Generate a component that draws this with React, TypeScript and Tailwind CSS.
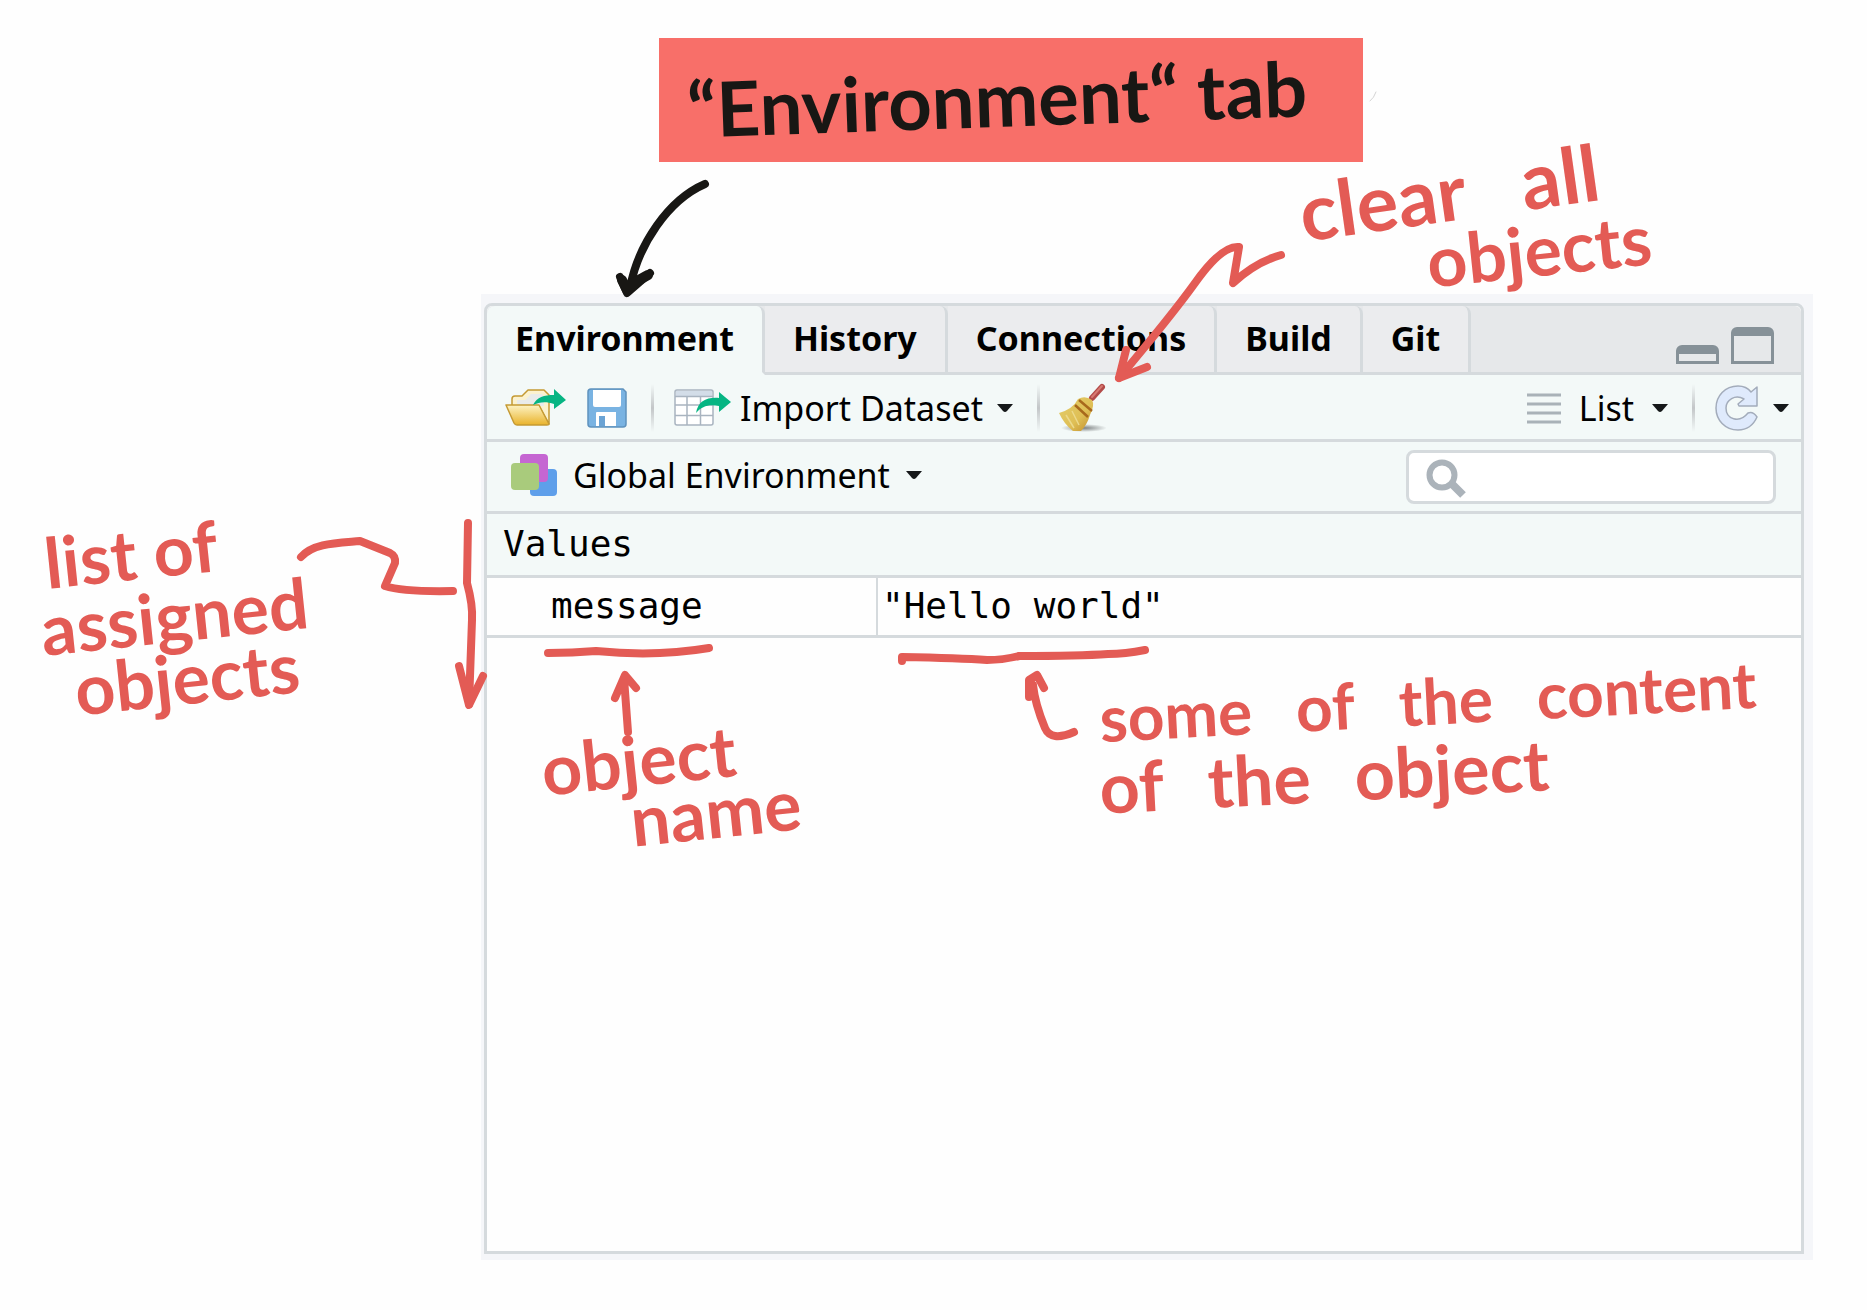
import type { ReactNode } from 'react'

const LINE = 'border-[#d5dadd]'
const HAND = "font-['Lato',sans-serif] font-bold leading-none whitespace-nowrap"

function Caret() {
  return (
    <svg className="h-2 w-4 shrink-0" viewBox="0 0 16 8" aria-hidden="true">
      <path d="M0 0H16L10 7Q8 9 6 7Z" fill="#15181a" />
    </svg>
  )
}

function Separator() {
  return <span className="h-12 w-[3px] shrink-0 bg-linear-to-b from-transparent via-[#c3c6c8] to-transparent" />
}

function FolderIcon() {
  return (
    <svg className="h-10 w-[62px]" viewBox="0 0 62 40" aria-hidden="true">
      <defs>
        <linearGradient id="folder" x1="0" y1="0" x2="0" y2="1">
          <stop offset="0" stopColor="#fdf3c4" />
          <stop offset="1" stopColor="#e9b32b" />
        </linearGradient>
      </defs>
      <path d="M7 19V11Q7 8 10 8H17L23 2H39L44 7V36L34 18Z" fill="#fbf2cf" stroke="#c59a33" strokeWidth="1.5" strokeLinejoin="round" />
      <path d="M12 18V12H20L26 6H37L39 9V18Z" fill="#e9ebea" />
      <path d="M1 17H34L44 36Q44 37 42 37H12Q10 37 9 35Z" fill="url(#folder)" stroke="#c59a33" strokeWidth="1.5" strokeLinejoin="round" />
      <path d="M28 17C32 9 39 7 49 7V1L61 12L49 21V16C41 13 34 14 28 17Z" fill="#06b583" />
    </svg>
  )
}

function SaveIcon() {
  return (
    <svg className="size-10" viewBox="0 0 40 40" aria-hidden="true">
      <path d="M4 1H36L39 4V36Q39 39 36 39H4Q1 39 1 36V4Q1 1 4 1Z" fill="#79b3e2" stroke="#5f92bd" strokeWidth="1.5" />
      <path d="M6 2H34V17Q34 19 32 19H8Q6 19 6 17Z" fill="#fff" />
      <path d="M9 25Q9 24 10 24H29V38H9Z" fill="#fff" />
      <path d="M12 28H18V38H12Z" fill="#6aa3d4" />
    </svg>
  )
}

function DatasetIcon() {
  return (
    <svg className="h-10 w-[58px]" viewBox="0 0 58 40" aria-hidden="true">
      <rect x="1" y="2" width="38" height="35" rx="2" fill="#fff" stroke="#a9b4c0" strokeWidth="1.5" />
      <path d="M2 3H38V8H2Z" fill="#d3dde8" />
      <path d="M1 8.500H39M1 17H39M1 27.500H39M13 8V37M26.500 8V37" stroke="#a9b4c0" strokeWidth="1.5" />
      <path d="M22 25C24 13 33 9 45 10V4L57 14L45 24V18C35 16 28 18 22 25Z" fill="#06b583" />
    </svg>
  )
}

function BroomIcon() {
  return (
    <svg className="h-[50px] w-12" viewBox="0 0 48 50" aria-hidden="true">
      <defs>
        <linearGradient id="straw" x1="0" y1="0" x2="1" y2="1">
          <stop offset="0.2" stopColor="#e2c964" />
          <stop offset="0.6" stopColor="#dfbf55" />
          <stop offset="1" stopColor="#c08c2c" />
        </linearGradient>
        <radialGradient id="shade">
          <stop offset="0" stopColor="#7d8182" />
          <stop offset="1" stopColor="#7d8182" stopOpacity="0" />
        </radialGradient>
      </defs>
      <ellipse cx="26" cy="45" rx="23" ry="4" fill="url(#shade)" />
      <path d="M34 15L44 4" stroke="#b34b49" strokeWidth="6" strokeLinecap="round" />
      <path d="M34 14L44 3" stroke="#d77a72" strokeWidth="2" strokeLinecap="round" />
      <path d="M1 30Q15 26 20 16Q27 12 34 17Q37 22 32 32Q29 42 23 48L15 48Q6 41 1 30Z" fill="url(#straw)" />
      <path d="M17 22L30 34M21 17L34 28" stroke="#a8691c" strokeWidth="2.500" />
      <path d="M8 32L16 45M14 28L21 42" stroke="#ecd98a" strokeWidth="1.500" />
    </svg>
  )
}

function LinesIcon() {
  return (
    <svg className="h-8 w-[34px]" viewBox="0 0 34 32" aria-hidden="true">
      <path d="M0 3H34M0 12H34M0 21H34M0 30H34" stroke="#a9b2b8" strokeWidth="3" />
    </svg>
  )
}

function RefreshIcon() {
  return (
    <svg className="h-[46px] w-11" viewBox="0 0 44 46" aria-hidden="true">
      <path
        d="M42 2V21H24L23 19L29 14C20 9 11 15 11 23C11 34 24 39 33 28Q38 26 42 32C38 41 31 45 23 45C10 45 1 35 1 23C1 11 10 1 23 1C29 1 33 3 36 7Z"
        fill="#dfeafc"
        stroke="#a3acbb"
        strokeWidth="1.500"
        strokeLinejoin="round"
      />
    </svg>
  )
}

function EnvironmentIcon() {
  return (
    <svg className="h-[42px] w-[46px]" viewBox="0 0 46 42" aria-hidden="true">
      <rect x="19" y="15" width="27" height="27" rx="4" fill="#5e9fea" />
      <rect x="9" y="0" width="28" height="28" rx="4" fill="#c566d2" />
      <rect x="0" y="9" width="28" height="27" rx="4" fill="#a9cb7c" />
    </svg>
  )
}

function SearchIcon() {
  return (
    <svg className="h-10 w-[42px] shrink-0" viewBox="0 0 42 40" aria-hidden="true">
      <circle cx="17" cy="16" r="12.500" fill="none" stroke="#abb3ba" strokeWidth="6" />
      <path d="M26 24L38 36" stroke="#abb3ba" strokeWidth="8" />
    </svg>
  )
}

function Tab({ active, children }: { active?: boolean; children: ReactNode }) {
  return (
    <button
      role="tab"
      aria-selected={!!active}
      className={
        active
          ? 'rounded-t-lg border-r-3 border-b-3 border-r-[#d5dadd] border-b-[#f3f9f8] bg-[#f3f9f8] px-7 pb-0.5 font-bold'
          : `rounded-tr-lg border-r-3 border-b-3 ${LINE} bg-[#ebecee] px-7 pb-0.5 font-bold`
      }
    >
      {children}
    </button>
  )
}

function Marks() {
  return (
    <svg className="pointer-events-none absolute inset-0 size-full overflow-visible" fill="none" strokeLinecap="round" strokeLinejoin="round" aria-hidden="true">
      <g stroke="#181714" strokeWidth="8">
        <path d="M705 184C668 200 638 245 630 288" />
        <path d="M620 277L627 293L650 273" />
        <path d="M622 280L627 290L634 284L628 286L648 275" strokeWidth="10" />
      </g>
      <path d="M1376 92Q1374 98 1370 101" stroke="#d4d4d4" strokeWidth="1" />
      <g stroke="#e35b55" strokeWidth="8">
        <path d="M1281 255Q1256 262 1233 283L1239 247Q1222 245 1195 283Q1172 315 1119 378" />
        <path d="M1126 350L1119 378L1147 367" />
        <path d="M301 557C313 543 337 543 360 541L390 553Q396 556 395 563L385 586Q403 592 453 591" />
        <path d="M468 523L467 583Q473 605 472 620L469 704" />
        <path d="M459 666L469 705L483 676" />
        <path d="M548 653Q572 653 596 651Q656 657 709 648" />
        <path d="M902 661V657Q960 658 987 660Q1003 660 1019 656Q1080 656 1108 654Q1125 654 1145 650" />
        <path d="M628 732L624 678M615 698L625 675L636 688" />
        <path d="M1074 732Q1051 742 1045 728Q1035 704 1033 685M1029 697V680L1037 675L1044 688" />
      </g>
    </svg>
  )
}

export default function App() {
  return (
    <div className="relative min-h-screen bg-[#fefefe] font-['Noto_Sans',sans-serif] text-[34px] leading-10 text-black">
      <header className="flex h-[294px] pt-[38px] pl-[659px]">
        <h1 className={`${HAND} flex h-[124px] w-[704px] items-center bg-[#f86f69] pb-1 pl-7 text-[76px] text-[#181714]`}>
          <span className="-rotate-2">“Environment“ tab</span>
        </h1>
      </header>

      <div className="flex">
        <aside className="w-[481px] shrink-0 pt-[228px] text-[#e35b55]">
          <p className="flex flex-col font-['Lato',sans-serif] text-[70px] leading-[62px] font-bold whitespace-nowrap">
            <span className="ml-11 -rotate-6 self-start">list of</span>
            <span className="ml-10 -rotate-6 self-start">assigned</span>
            <span className="ml-[74px] -rotate-6 self-start">objects</span>
          </p>
        </aside>

        <main className="mr-[54px] min-w-0 flex-1 bg-[#f5f6f9] pt-[9px] pr-[9px] pb-1.5 pl-[3px]">
          <section className={`rounded-t-lg border-3 ${LINE} bg-[#fefefe]`}>
            <div className="flex h-[69px] rounded-t-md bg-[#e6e8ea]">
              <div role="tablist" className="flex">
                <Tab active>Environment</Tab>
                <Tab>History</Tab>
                <Tab>Connections</Tab>
                <Tab>Build</Tab>
                <Tab>Git</Tab>
              </div>
              <div className={`flex flex-1 items-end justify-end gap-3 border-b-3 ${LINE} pr-[27px] pb-2`}>
                <button aria-label="Minimize" className="h-[19px] w-[43px] rounded-t-md border-3 border-t-9 border-[#869198]" />
                <button aria-label="Maximize" className="h-[37px] w-[43px] rounded-t-md border-3 border-t-9 border-[#869198]" />
              </div>
            </div>

            <div className={`flex h-[67px] items-center border-b-3 ${LINE} bg-[#f3f9f8] pt-0.5 pr-3 pl-[18px]`}>
              <button aria-label="Load workspace"><FolderIcon /></button>
              <button aria-label="Save workspace" className="mr-6 ml-5"><SaveIcon /></button>
              <Separator />
              <button className="mr-6 ml-5 flex items-center gap-2">
                <DatasetIcon />
                <span>Import Dataset</span>
                <span className="ml-1.5"><Caret /></span>
              </button>
              <Separator />
              <button aria-label="Clear all objects" className="ml-[18px]"><BroomIcon /></button>
              <button className="mr-6 ml-auto flex items-center gap-[18px]">
                <LinesIcon />
                <span>List</span>
                <Caret />
              </button>
              <Separator />
              <button aria-label="Refresh" className="ml-5 flex items-center gap-3.5">
                <RefreshIcon />
                <Caret />
              </button>
            </div>

            <div className={`flex h-[72px] items-center justify-between border-b-3 ${LINE} bg-[#f3f9f8] pr-[25px] pl-6`}>
              <button className="flex items-center gap-4 pb-1">
                <EnvironmentIcon />
                <span>Global Environment</span>
                <Caret />
              </button>
              <label className={`flex h-[54px] w-[370px] items-center rounded-lg border-3 ${LINE} bg-white pt-1 pl-4`}>
                <SearchIcon />
                <input type="search" aria-label="Search environment" className="min-w-0 flex-1 px-2 outline-none" />
              </label>
            </div>

            <div className="min-h-[737px]">
              <table className="w-full table-fixed border-collapse text-left font-['DejaVu_Sans_Mono',monospace] text-[36px]">
                <colgroup>
                  <col className="w-[390px]" />
                  <col />
                </colgroup>
                <thead>
                  <tr className={`h-[62px] border-b-3 ${LINE} bg-[#f3f9f8]`}>
                    <th colSpan={2} className="pl-4 font-normal">Values</th>
                  </tr>
                </thead>
                <tbody>
                  <tr className={`h-[60px] border-b-3 ${LINE}`}>
                    <td className={`border-r-2 ${LINE} pl-16`}>message</td>
                    <td className="pl-1">"Hello world"</td>
                  </tr>
                </tbody>
              </table>
            </div>
          </section>
        </main>
      </div>

      <p className={`${HAND} absolute top-[152px] left-[1298px] flex -rotate-8 gap-14 text-[78px] text-[#e35b55]`}>
        <span>clear</span>
        <span>all</span>
      </p>
      <p className={`${HAND} absolute top-[214px] left-[1426px] -rotate-6 text-[70px] text-[#e35b55]`}>objects</p>
      <p className={`${HAND} absolute top-[724px] left-[541px] -rotate-6 text-[70px] text-[#e35b55]`}>object</p>
      <p className={`${HAND} absolute top-[776px] left-[630px] -rotate-6 text-[70px] text-[#e35b55]`}>name</p>
      <p className={`${HAND} absolute top-[669px] left-[1099px] flex -rotate-3 gap-11 text-[64px] text-[#e35b55]`}>
        <span>some</span>
        <span>of</span>
        <span>the</span>
        <span>content</span>
      </p>
      <p className={`${HAND} absolute top-[740px] left-[1099px] flex -rotate-3 gap-11 text-[70px] text-[#e35b55]`}>
        <span>of</span>
        <span>the</span>
        <span>object</span>
      </p>
      <Marks />
    </div>
  )
}
